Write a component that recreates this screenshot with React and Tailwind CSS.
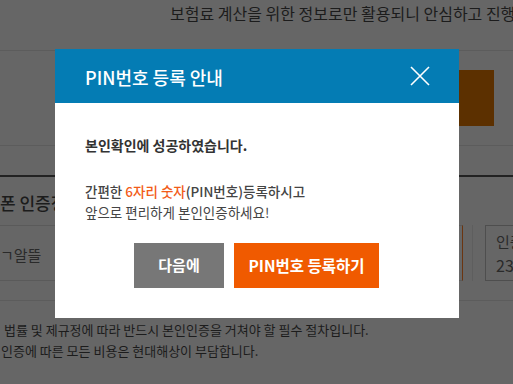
export default function App() {
  const font = { fontFamily: '"Noto Sans CJK KR", "Noto Sans", sans-serif' };
  return (
    <div className="relative w-[513px] h-[384px] overflow-hidden bg-[#666666]" style={font}>
      {/* background page (dimmed) */}
      <div className="flex flex-col w-full">
        <div className="h-[51px] border-b border-[#5c5c5c] pl-[170px]">
          <p className="text-[16px] leading-[26px] text-[#1c1c1c] whitespace-nowrap">
            보험료 계산을 위한 정보로만 활용되니 안심하고 진행
          </p>
        </div>
        <div className="relative h-[95px] border-b border-[#5c5c5c]">
          <div className="absolute left-[459px] top-[19px] w-[35px] h-[56px] bg-[#5c3000]" />
        </div>
        <div className="h-[31px] border-b-2 border-[#222222]" />
        <div className="h-[48px] flex items-center">
          <p className="text-[17px] font-medium text-[#1c1c1c] whitespace-nowrap leading-[24px] pt-[4px]">폰 인증정보</p>
        </div>
        <div className="h-[56px] flex">
          <div className="w-[463px] shrink-0 flex items-center border-y border-[#5a5a5a] border-r border-r-[#6b3510]">
            <span className="text-[15px] text-[#2a2a2a] leading-[24px] pt-[4px]">ㄱ알뜰</span>
          </div>
          <div className="w-[10px] shrink-0 border-r border-[#5e5e5e]" />
          <div className="ml-[12px] w-[80px] shrink-0 border border-[#4e4e4e] pl-[10px] flex flex-col justify-center whitespace-nowrap">
            <span className="text-[15px] text-[#2a2a2a] leading-[24px]">인증</span>
            <span className="text-[16px] text-[#2a2a2a] leading-[22px]">23</span>
          </div>
        </div>
        <div className="h-[20px] border-b border-[#5c5c5c]" />
        <div className="pt-[18px] flex flex-col text-[13px] leading-[21px] text-[#1c1c1c] whitespace-nowrap">
          <p className="pl-[4px]">법률 및 제규정에 따라 반드시 본인인증을 거쳐야 할 필수 절차입니다.</p>
          <p className="pl-[1px]">인증에 따른 모든 비용은 현대해상이 부담합니다.</p>
        </div>
      </div>

      {/* modal */}
      <div className="absolute left-[55px] top-[49px] w-[404px] h-[269px] bg-white flex flex-col">
        <div className="h-[54px] bg-[#047cb4] flex items-center justify-between pl-[30px] pr-[29px]">
          <h2 className="text-[18px] font-medium text-white leading-[24px] pt-[1px]">PIN번호 등록 안내</h2>
          <svg width="20" height="20" viewBox="0 0 20 20" className="block">
            <path d="M1 1 L19 19 M19 1 L1 19" stroke="white" strokeWidth="1.6" fill="none" />
          </svg>
        </div>
        <div className="flex flex-col px-[30px] pt-[32px]">
          <p className="text-[14px] leading-[21px] font-bold text-[#333333]">본인확인에 성공하였습니다.</p>
          <div className="mt-[25px] text-[13.5px] leading-[21px] text-[#444444]">
            <p className="font-medium">
              간편한 <span className="text-[#f25c19]">6자리 숫자</span>(PIN번호)등록하시고
            </p>
            <p>앞으로 편리하게 본인인증하세요!</p>
          </div>
          <div className="mt-[20px] flex justify-center gap-[10px] -ml-[1px]">
            <button className="w-[90px] h-[45px] bg-[#777777] text-white text-[15px] font-bold flex items-center justify-center">
              다음에
            </button>
            <button className="w-[145px] h-[45px] bg-[#f05a00] text-white text-[15.5px] font-bold flex items-center justify-center">
              PIN번호 등록하기
            </button>
          </div>
        </div>
      </div>
    </div>
  );
}
